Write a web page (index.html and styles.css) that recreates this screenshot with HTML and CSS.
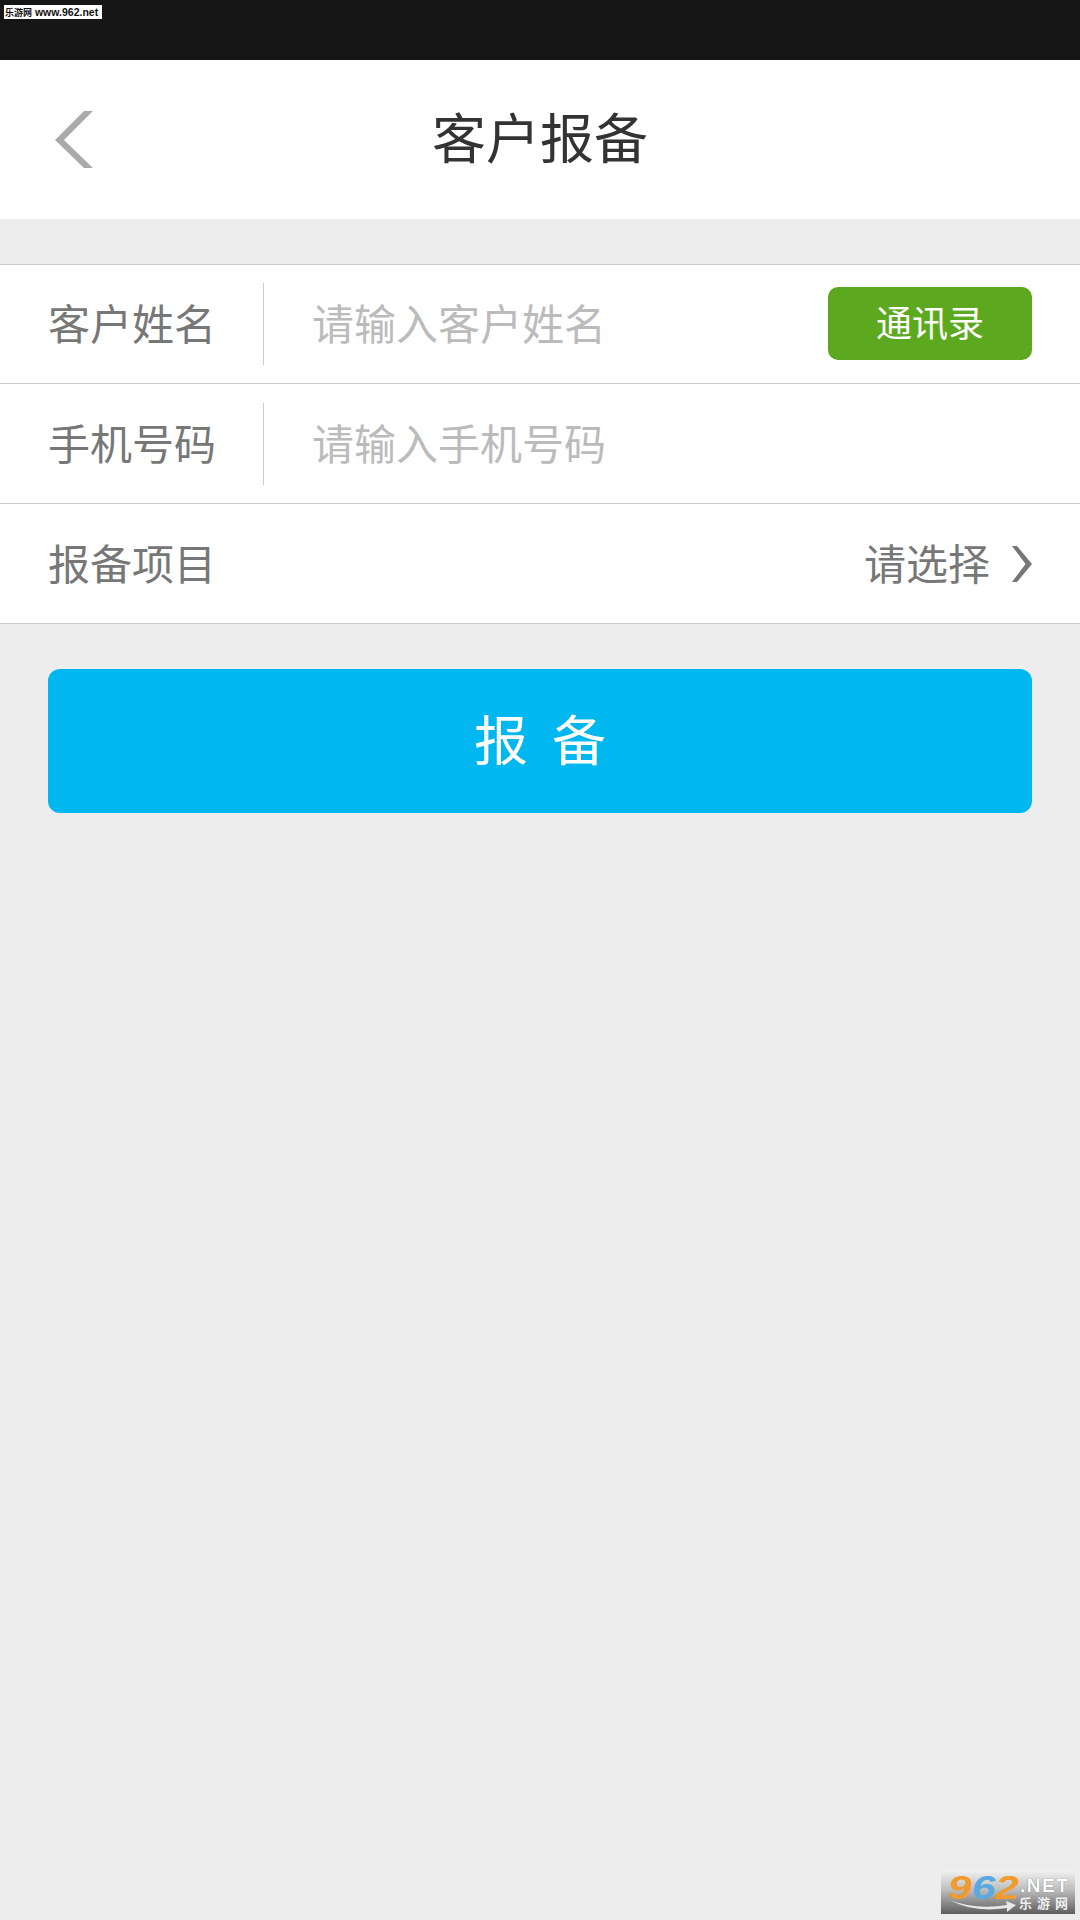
FILE: index.html
```html
<!DOCTYPE html>
<html lang="zh">
<head>
<meta charset="utf-8">
<title>客户报备</title>
<link rel="stylesheet" href="styles.css">
</head>
<body>
<div class="status"><span class="mark"><span class="mark-cn">乐游网</span> www.962.net</span></div>
<header class="head">
  <svg class="back" width="40" height="60" viewBox="0 0 40 60"><path d="M30 1 H39 L10 30 L39 58 H30 L1 30 Z" fill="#aaa"/></svg>
  <h1 class="title">客户报备</h1>
</header>
<section class="form">
  <div class="row">
    <span class="label">客户姓名</span><i class="sep"></i>
    <span class="ph">请输入客户姓名</span>
    <span class="contacts">通讯录</span>
  </div>
  <div class="row">
    <span class="label">手机号码</span><i class="sep"></i>
    <span class="ph">请输入手机号码</span>
  </div>
  <div class="row">
    <span class="label">报备项目</span>
    <span class="choose">请选择</span>
    <svg class="more" width="22" height="38" viewBox="0 0 22 38"><path d="M0 1 H5 L20 19 L5 37 H0 L13.500 19 Z" fill="#777"/></svg>
  </div>
</section>
<div class="submit">报 备</div>
<div class="logo">
  <span class="num"><b class="o">9</b><b class="b">6</b><b class="o">2</b></span>
  <span class="net">.NET</span>
  <span class="cn">乐游网</span>
  <svg class="swoosh" width="68" height="14" viewBox="0 0 68 14"><path d="M1 1 Q26 11 58 6 L57 2 L67 6 L58 13 L58 9 Q24 14 1 1Z" fill="#e8e8e8"/></svg>
</div>
</body>
</html>
```
FILE: styles.css
```css
* { box-sizing: border-box; }
html, body { margin: 0; padding: 0; }
body {
  width: 1080px; height: 1920px; overflow: hidden; position: relative;
  background: #ededed;
  font-family: "Noto Sans CJK SC", "Liberation Sans", sans-serif;
}
.status { height: 60px; background: #161616; padding: 5px 0 0 4px; }
.mark {
  display: block; width: 98px; height: 14px; background: #fff; color: #111;
  font: 700 10.5px/14px "Liberation Sans", "Noto Sans CJK SC", sans-serif;
  white-space: nowrap; overflow: hidden; padding-left: 1px;
}
.mark-cn { font-size: 9px; font-family: "Noto Sans CJK SC", sans-serif; }
.head {
  height: 159px; background: #fff; position: relative;
  display: flex; align-items: center; justify-content: center;
  padding-bottom: 8px;
}
.back { position: absolute; left: 54px; top: 50px; }
.title { margin: 0; font-size: 54px; font-weight: 400; color: #333; line-height: 1; }
.form { margin-top: 45px; border-top: 1px solid #ccc; background: #fff; }
.row {
  height: 120px; border-bottom: 1px solid #ccc;
  display: flex; align-items: center; padding: 0 48px; font-size: 42px;
}
.row:first-child { height: 119px; }
.label { width: 215px; color: #777; line-height: 1; height: 46px; }
.sep { width: 1px; height: 82px; background: #ccc; }
.ph { margin-left: 48px; color: #bbb; line-height: 1; flex: 1; height: 46px; }
.contacts {
  width: 204px; height: 73px; border-radius: 10px; background: #5ca81e; color: #fff;
  font-size: 36px; display: flex; align-items: center; justify-content: center;
  padding-bottom: 6px; margin-top: -1px;
}
.choose { margin-left: auto; color: #777; line-height: 1; height: 46px; }
.more { margin-left: 22px; margin-right: -2px; }
.submit {
  margin: 45px 48px 0; height: 144px; border-radius: 12px; background: #00b7f0; color: #fff;
  font-size: 54px; display: flex; align-items: center; justify-content: center;
  white-space: pre; word-spacing: 12px; padding-bottom: 8px;
}
.logo {
  position: absolute; left: 941px; top: 1870px; width: 134px; height: 44px;
  background: linear-gradient(#f2f2f2, #bdbdbd 45%, #5e5e5e);
}
.num {
  position: absolute; left: 7px; top: 2px; font: italic 700 34px/30px "Liberation Sans", sans-serif;
  transform: scaleX(1.25); transform-origin: left top; white-space: nowrap;
}
.num b { font-weight: 700; }
.o { color: #f39a2c; }
.b { color: #5aa9e0; }
.net {
  position: absolute; left: 79px; top: 6px; color: #fff; font: 700 19px/20px "Liberation Sans", sans-serif;
  letter-spacing: 1.5px; white-space: nowrap; text-shadow: 0 0 1px #555;
}
.cn {
  position: absolute; left: 78px; top: 25px; color: #eee; font-size: 13px; line-height: 16px;
  letter-spacing: 5px; white-space: nowrap; font-weight: 700;
}
.swoosh { position: absolute; left: 8px; top: 29px; }
```
